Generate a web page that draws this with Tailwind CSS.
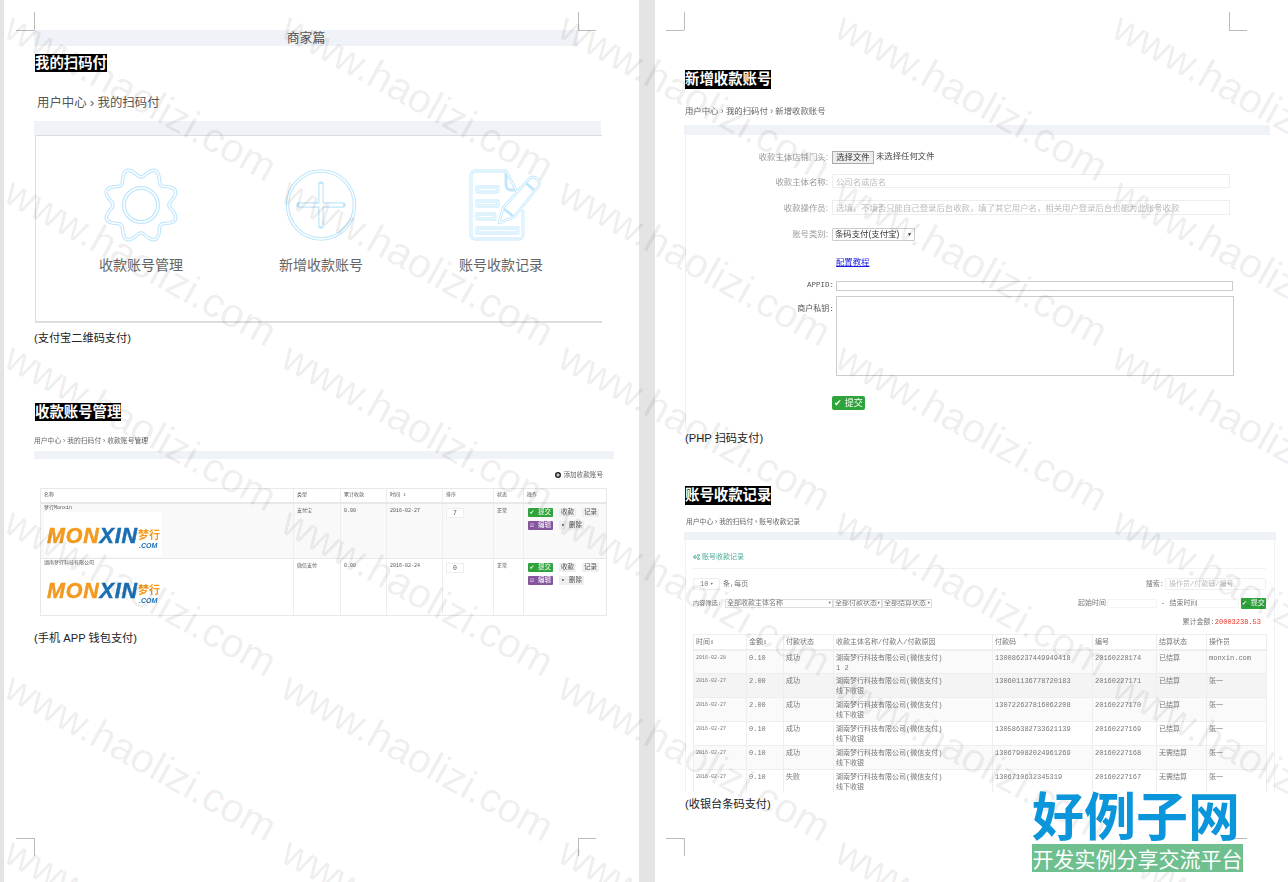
<!DOCTYPE html>
<html lang="zh-CN">
<head>
  <meta charset="UTF-8" />
  <title>商家篇</title>
  <script src="https://cdn.jsdelivr.net/npm/@tailwindcss/browser@4"></script>
</head>
<body class="relative w-[1288px] h-[882px] overflow-hidden bg-[#e4e4e4] text-[#333] font-['Liberation_Sans','Noto_Sans_CJK_SC',sans-serif]">
<div class="flex items-start">

  <!-- page 1 -->
  <section class="relative ml-[4px] w-[635px] h-[882px] bg-white pt-[30px] pl-[30px]">
    <span class="absolute left-[30px] top-[12px] w-px h-[18px] bg-[#bbb]"></span>
    <span class="absolute left-[12px] top-[30px] w-[18px] h-px bg-[#bbb]"></span>
    <span class="absolute left-[574px] top-[12px] w-px h-[18px] bg-[#bbb]"></span>
    <span class="absolute left-[574px] top-[30px] w-[18px] h-px bg-[#bbb]"></span>
    <span class="absolute left-[30px] top-[838px] w-px h-[18px] bg-[#bbb]"></span>
    <span class="absolute left-[12px] top-[838px] w-[18px] h-px bg-[#bbb]"></span>
    <span class="absolute left-[574px] top-[838px] w-px h-[18px] bg-[#bbb]"></span>
    <span class="absolute left-[574px] top-[838px] w-[18px] h-px bg-[#bbb]"></span>

    <div class="w-[544px] h-4 bg-[#eff2f6] text-center text-[12.8px] leading-4 text-[#555]">商家篇</div>
    <h2 class="mt-2 ml-px w-fit h-[18px] bg-black text-white text-[14.4px] leading-[18px] font-bold">我的扫码付</h2>
    <div class="mt-6 h-[15px] pl-[3px] text-[12.4px] leading-[15px] text-[#555]">用户中心 › 我的扫码付</div>
    <div class="mt-[10px] w-[567px] h-[14px] bg-[#eff2f6]"></div>

    <div class="w-[567px] h-[188px] ml-px border-l border-t border-b-2 border-[#ddd] grid grid-cols-[180px_180px_180px] pl-[15px] pt-[31px] text-center">
      <div class="flex flex-col items-center">
        <svg width="76" height="76" viewBox="0 0 76 76" fill="none">
          <path class="gear-path" stroke="#bfe6fb" stroke-width="3.6"/>
          <path class="gear-path" stroke="#fff" stroke-width="1.4"/>
          <circle cx="38" cy="38" r="17" stroke="#bfe6fb" stroke-width="4"/>
          <circle cx="38" cy="38" r="17" stroke="#fff" stroke-width="1.6"/>
        </svg>
        <span class="mt-[13px] text-[14px] leading-[18px] text-[#666]">收款账号管理</span>
      </div>
      <div class="flex flex-col items-center">
        <svg width="76" height="76" viewBox="0 0 76 76" fill="none">
          <ellipse cx="38" cy="38" rx="33.5" ry="34" stroke="#bfe6fb" stroke-width="3.6"/>
          <ellipse cx="38" cy="38" rx="33.5" ry="34" stroke="#fff" stroke-width="1.4"/>
          <path d="M38 17V59M16 38H60" stroke="#bfe6fb" stroke-width="5.4" stroke-linecap="round"/>
          <path d="M38 17V59M16 38H60" stroke="#fff" stroke-width="3"/>
        </svg>
        <span class="mt-[13px] text-[14px] leading-[18px] text-[#666]">新增收款账号</span>
      </div>
      <div class="flex flex-col items-center">
        <svg width="76" height="76" viewBox="-7 -3 76 76" fill="none" class="overflow-visible">
          <g stroke="#bfe6fb" stroke-width="2.8" stroke-linejoin="round">
            <path d="M47 22L36 1H5a4 4 0 0 0-4 4V65a4 4 0 0 0 4 4H49a4 4 0 0 0 4-4V40"/>
            <path d="M36 1V15a5 5 0 0 0 5 5H47"/>
            <path d="M7 17H28V22H7ZM7 31H28V36H7ZM7 44H25V49H7ZM7 58H48V63H7Z"/>
            <path d="M29 53L33 38L59 9Q63 5 67 9Q71 13 68 17L44 47Z"/>
            <path d="M33 38L44 47M56 13L65 21"/>
          </g>
          <g stroke="#fff" stroke-width="1.1" stroke-linejoin="round">
            <path d="M47 22L36 1H5a4 4 0 0 0-4 4V65a4 4 0 0 0 4 4H49a4 4 0 0 0 4-4V40"/>
            <path d="M7 17H28V22H7ZM7 31H28V36H7ZM7 44H25V49H7ZM7 58H48V63H7Z"/>
            <path d="M29 53L33 38L59 9Q63 5 67 9Q71 13 68 17L44 47Z"/>
          </g>
        </svg>
        <span class="mt-[13px] text-[14px] leading-[18px] text-[#666]">账号收款记录</span>
      </div>
    </div>

    <p class="mt-2 h-[14px] text-[11.2px] leading-[14px] text-[#222]">(支付宝二维码支付)</p>

    <h2 class="mt-[58px] ml-px w-fit h-[18px] bg-black text-white text-[14.4px] leading-[18px] font-bold">收款账号管理</h2>
    <div class="mt-[15px] h-[10px] text-[6.8px] leading-[10px] text-[#666] blur-[0.3px]">用户中心 › 我的扫码付 › 收款账号管理</div>
    <div class="mt-[5px] w-[580px] h-2 bg-[#eff2f6]"></div>
    <div class="mt-[11px] w-[569px] h-[10px] flex justify-end items-center gap-[2px] text-[6.6px] leading-[10px] text-[#666] blur-[0.3px]">
      <svg width="6" height="6" viewBox="0 0 6 6"><circle cx="3" cy="3" r="3" fill="#222"/><path d="M3 1.3V4.7M1.3 3H4.7" stroke="#fff" stroke-width="1"/></svg>
      添加收款账号
    </div>

    <table class="mt-2 ml-[6px] w-[566px] table-fixed border border-[#e8e8e8] text-[5px] leading-[7px] text-[#555] blur-[0.25px] font-['Liberation_Mono','Noto_Sans_CJK_SC',monospace]">
      <colgroup><col class="w-[253px]"/><col class="w-[47px]"/><col class="w-[46px]"/><col class="w-[56px]"/><col class="w-[51px]"/><col class="w-[30px]"/><col class="w-[83px]"/></colgroup>
      <tbody>
        <tr class="h-[14px] border-b-2 border-[#e8e8e8]">
          <td class="border-r border-[#eee] px-[3px]">名称</td><td class="border-r border-[#eee] px-[3px]">类型</td><td class="border-r border-[#eee] px-[3px]">累计收款</td><td class="border-r border-[#eee] px-[3px]">时间 ⇕</td><td class="border-r border-[#eee] px-[3px]">排序</td><td class="border-r border-[#eee] px-[3px]">状态</td><td class="px-[3px]">操作</td>
        </tr>
        <tr class="h-[56px] bg-[#f9f9f9] border-b border-[#e8e8e8] align-top">
          <td class="border-r border-[#eee] px-[3px] pt-px">
            梦行Monxin
            <div class="w-[118px] h-[45px] bg-white relative">
              <span class="absolute left-[3px] top-[13px] text-[21.5px] leading-[22px] font-bold italic tracking-[0.8px] [-webkit-text-stroke:0.5px_currentColor] font-['Liberation_Sans',sans-serif]"><span class="text-[#f39a1f]">MON</span><span class="text-[#1a6fb4]">XIN</span></span>
              <span class="absolute left-[94px] top-[16px] text-[11px] leading-[12px] font-bold text-[#f39a1f] font-['Noto_Sans_CJK_SC',sans-serif]">梦行</span>
              <span class="absolute left-[95px] top-[30px] text-[7px] leading-[8px] font-bold italic text-[#1a6fb4] font-['Liberation_Sans',sans-serif]">.COM</span>
            </div>
          </td>
          <td class="border-r border-[#eee] px-[3px] pt-[4px]">支付宝</td>
          <td class="border-r border-[#eee] px-[3px] pt-[4px]">0.00</td>
          <td class="border-r border-[#eee] px-[3px] pt-[4px]">2016-02-27</td>
          <td class="border-r border-[#eee] px-[3px] pt-[4px]"><div class="w-[18px] h-[10px] border border-[#eee] bg-white text-center text-[6.5px] leading-[9px]">7</div></td>
          <td class="border-r border-[#eee] px-[3px] pt-[4px]">正常</td>
          <td class="px-[4px] pt-[4px]">
            <div class="flex gap-[6px] text-[6.5px] leading-[9px]"><span class="flex items-center gap-[1px] w-[25px] h-[9px] rounded-[1px] bg-[#2fa33c] text-white justify-center">✔ 提交</span><span class="w-[17px] h-[9px] bg-[#f0f0f0] text-center">收款</span><span class="w-[17px] h-[9px] bg-[#f0f0f0] text-center">记录</span></div>
            <div class="flex gap-[6px] mt-[4px] text-[6.5px] leading-[9px]"><span class="w-[25px] h-[9px] rounded-[1px] bg-[#85569d] text-white text-center">☑ 编辑</span><span class="w-[25px] h-[9px] bg-[#eee] text-center">▪ 删除</span></div>
          </td>
        </tr>
        <tr class="h-[57px] align-top">
          <td class="border-r border-[#eee] px-[3px] pt-px">
            湖南梦行科技有限公司
            <div class="w-[118px] h-[45px] bg-white relative">
              <span class="absolute left-[3px] top-[13px] text-[21.5px] leading-[22px] font-bold italic tracking-[0.8px] [-webkit-text-stroke:0.5px_currentColor] font-['Liberation_Sans',sans-serif]"><span class="text-[#f39a1f]">MON</span><span class="text-[#1a6fb4]">XIN</span></span>
              <span class="absolute left-[94px] top-[16px] text-[11px] leading-[12px] font-bold text-[#f39a1f] font-['Noto_Sans_CJK_SC',sans-serif]">梦行</span>
              <span class="absolute left-[95px] top-[30px] text-[7px] leading-[8px] font-bold italic text-[#1a6fb4] font-['Liberation_Sans',sans-serif]">.COM</span>
            </div>
          </td>
          <td class="border-r border-[#eee] px-[3px] pt-[4px]">微信支付</td>
          <td class="border-r border-[#eee] px-[3px] pt-[4px]">0.00</td>
          <td class="border-r border-[#eee] px-[3px] pt-[4px]">2016-02-24</td>
          <td class="border-r border-[#eee] px-[3px] pt-[4px]"><div class="w-[18px] h-[10px] border border-[#eee] bg-white text-center text-[6.5px] leading-[9px]">0</div></td>
          <td class="border-r border-[#eee] px-[3px] pt-[4px]">正常</td>
          <td class="px-[4px] pt-[4px]">
            <div class="flex gap-[6px] text-[6.5px] leading-[9px]"><span class="flex items-center gap-[1px] w-[25px] h-[9px] rounded-[1px] bg-[#2fa33c] text-white justify-center">✔ 提交</span><span class="w-[17px] h-[9px] bg-[#f0f0f0] text-center">收款</span><span class="w-[17px] h-[9px] bg-[#f0f0f0] text-center">记录</span></div>
            <div class="flex gap-[6px] mt-[4px] text-[6.5px] leading-[9px]"><span class="w-[25px] h-[9px] rounded-[1px] bg-[#85569d] text-white text-center">☑ 编辑</span><span class="w-[25px] h-[9px] bg-[#eee] text-center">▪ 删除</span></div>
          </td>
        </tr>
      </tbody>
    </table>

    <p class="mt-[15px] h-[14px] text-[11.2px] leading-[14px] text-[#222]">(手机 APP 钱包支付)</p>
  </section>

  <!-- page 2 -->
  <section class="relative ml-4 w-[633px] h-[882px] bg-white pt-[70px] pl-[29px]">
    <span class="absolute left-[29px] top-[12px] w-px h-[18px] bg-[#bbb]"></span>
    <span class="absolute left-[11px] top-[30px] w-[18px] h-px bg-[#bbb]"></span>
    <span class="absolute left-[574px] top-[12px] w-px h-[18px] bg-[#bbb]"></span>
    <span class="absolute left-[574px] top-[30px] w-[18px] h-px bg-[#bbb]"></span>
    <span class="absolute left-[29px] top-[838px] w-px h-[18px] bg-[#bbb]"></span>
    <span class="absolute left-[11px] top-[838px] w-[18px] h-px bg-[#bbb]"></span>
    <span class="absolute left-[574px] top-[838px] w-[18px] h-px bg-[#bbb]"></span>

    <h2 class="ml-px w-fit h-[19px] bg-black text-white text-[14.4px] leading-[19px] font-bold">新增收款账号</h2>
    <div class="mt-[17px] ml-px h-[10px] text-[8.4px] leading-[10px] text-[#666] blur-[0.25px]">用户中心 › 我的扫码付 › 新增收款账号</div>
    <div class="mt-[9px] w-[586px] h-[10px] bg-[#eff2f6]"></div>

    <div class="ml-px w-[585px] h-[295px] border-l border-[#f0f0f0] pt-4 text-[8.4px] text-[#999] blur-[0.25px]">
      <div class="flex items-center h-[13px]">
        <label class="w-[142px] text-right">收款主体店铺门头:</label>
        <span class="ml-1 w-[42px] h-[13px] bg-[#eee] border border-[#aaa] text-[#333] text-center leading-[11px]">选择文件</span>
        <span class="ml-[2px] -mt-[3px] text-[#444]">未选择任何文件</span>
      </div>
      <div class="flex items-center h-[14px] mt-[10px] leading-[15px]">
        <label class="w-[142px] text-right pt-[2px]">收款主体名称:</label>
        <span class="ml-1 w-[398px] h-[14px] border border-[#eee] px-[3px] text-[#bbb] leading-[14px]">公司名或店名</span>
      </div>
      <div class="flex items-center h-[15px] mt-[12px]">
        <label class="w-[142px] text-right pt-px">收款操作员:</label>
        <span class="ml-1 w-[398px] h-[15px] border border-[#eee] px-[3px] text-[#bbb] leading-[14px]">选填，不填否只能自己登录后台收款，填了其它用户名，相关用户登录后台也能为此账号收款</span>
      </div>
      <div class="flex items-center h-[13px] mt-[13px]">
        <label class="w-[142px] text-right">账号类别:</label>
        <span class="ml-1 w-[83px] h-[13px] border border-[#ccc] rounded-[1px] px-[2px] text-[#333] leading-[11px] flex justify-between"><span>条码支付(支付宝)</span><span class="text-[5px]">▼</span></span>
      </div>
      <a class="block mt-4 ml-[150px] h-[10px] leading-[10px] text-[#1a1ae0] underline">配置教程</a>
      <div class="flex items-center h-[10px] mt-[14px] font-['Liberation_Mono','Noto_Sans_CJK_SC',monospace] text-[#555] text-[7.5px]">
        <label class="w-[148px] text-right">APPID:</label>
        <span class="ml-[2px] w-[397px] h-[10px] border border-[#ccc]"></span>
      </div>
      <div class="flex items-start h-[80px] mt-[5px] font-['Liberation_Mono','Noto_Sans_CJK_SC',monospace] text-[#555] text-[8px]">
        <label class="w-[148px] text-right mt-[7px]">商户私钥:</label>
        <span class="ml-[2px] w-[398px] h-[80px] border border-[#ccc]"></span>
      </div>
      <div class="mt-[20px] ml-[146px] w-[33px] h-[14px] rounded-[2px] bg-[#2fa33c] text-white text-[9px] leading-[14px] text-center">✔ 提交</div>
    </div>

    <p class="mt-px ml-px h-[14px] text-[11.2px] leading-[14px] text-[#222]">(PHP 扫码支付)</p>

    <h2 class="mt-[41px] ml-px w-fit h-[19px] bg-black text-white text-[14.4px] leading-[19px] font-bold">账号收款记录</h2>
    <div class="mt-[12px] ml-[2px] h-[10px] text-[6.8px] leading-[10px] text-[#666] blur-[0.3px]">用户中心 › 我的扫码付 › 账号收款记录</div>
    <div class="mt-[5px] w-[592px] h-2 bg-[#eff2f6]"></div>

    <div class="ml-px w-[590px] h-[252px] overflow-hidden border-x border-[#eff2f6] pl-[7px] pr-2 pt-3 text-[7px] text-[#777] blur-[0.3px] font-['Liberation_Mono','Noto_Sans_CJK_SC',monospace]">
      <div class="h-[10px] leading-[10px] text-[#4bab99] flex items-center gap-[2px]">
        <svg width="7" height="6" viewBox="0 0 7 6" fill="none" stroke="#4bab99"><circle cx="2" cy="3" r="1.3"/><circle cx="5.5" cy="1.3" r="1"/><circle cx="5.5" cy="4.7" r="1"/></svg>
        账号收款记录
      </div>
      <div class="mt-[6px] h-px w-[573px] bg-[#f2f2f2]"></div>
      <div class="mt-[9px] w-[573px] h-3 flex items-center justify-between">
        <div class="flex items-center gap-[3px]"><span class="w-[27px] h-3 border border-[#eee] rounded-[2px] px-[6px] leading-[10px] flex justify-between"><span>10</span><span class="text-[4px]">▼</span></span>条,每页</div>
        <div class="flex items-center gap-[1px]">搜索:<span class="w-[101px] h-3 border border-[#eee] rounded-[2px] px-[3px] leading-[10px] text-[#bbb]">操作员/付款码/编号</span></div>
      </div>
      <div class="mt-2 w-[573px] h-[11px] flex items-center">
        <span class="w-[32px] text-[6.2px] whitespace-nowrap">内容筛选:</span>
        <span class="w-[108px] h-[9px] border border-[#ddd] px-px leading-[7px] flex justify-between"><span>全部收款主体名称</span><span class="text-[4px]">▼</span></span>
        <span class="w-[49px] h-[9px] border border-[#ddd] px-px leading-[7px] flex justify-between whitespace-nowrap overflow-hidden"><span>全部付款状态</span><span class="text-[4px]">▼</span></span>
        <span class="w-[50px] h-[9px] border border-[#ddd] px-px leading-[7px] flex justify-between whitespace-nowrap overflow-hidden"><span>全部结算状态</span><span class="text-[4px]">▼</span></span>
        <span class="ml-[146px] w-[29px]">起始时间</span>
        <span class="w-[50px] h-[9px] border border-[#f4f4f4]"></span>
        <span class="ml-[4px] w-[33px] whitespace-nowrap">- 结束时间</span>
        <span class="w-[45px] h-[9px] border border-[#f4f4f4]"></span>
        <span class="ml-[2px] w-[25px] h-[11px] rounded-[1px] bg-[#2fa33c] text-white leading-[11px] text-center whitespace-nowrap">✔ 提交</span>
      </div>
      <div class="mt-2 w-[568px] h-[10px] leading-[10px] text-right">累计金额:<span class="text-[#ee3322]">20003238.53</span></div>
      <table class="mt-[7px] w-[573px] table-fixed border border-[#eee]">
        <colgroup><col class="w-[53px]"/><col class="w-[37px]"/><col class="w-[50px]"/><col class="w-[159px]"/><col class="w-[100px]"/><col class="w-[64px]"/><col class="w-[50px]"/><col class="w-[60px]"/></colgroup>
        <thead>
          <tr class="h-[15px] border-b-2 border-[#eee] text-left">
            <th class="font-normal border-r border-[#eee] px-[2px]">时间⇕</th><th class="font-normal border-r border-[#eee] px-[2px]">金额⇕</th><th class="font-normal border-r border-[#eee] px-[2px]">付款状态</th><th class="font-normal border-r border-[#eee] px-[2px]">收款主体名称/付款人/付款原因</th><th class="font-normal border-r border-[#eee] px-[2px]">付款码</th><th class="font-normal border-r border-[#eee] px-[2px]">编号</th><th class="font-normal border-r border-[#eee] px-[2px]">结算状态</th><th class="font-normal px-[2px]">操作员</th>
          </tr>
        </thead>
        <tbody id="records"></tbody>
      </table>
    </div>

    <p class="mt-[5px] ml-px h-[14px] text-[11.2px] leading-[14px] text-[#222]">(收银台条码支付)</p>
  </section>
</div>

<!-- watermark -->
<div id="marks" class="absolute inset-0 overflow-hidden pointer-events-none"></div>

<!-- site logo -->
<div class="absolute left-[1032px] top-[790px] w-[211px]">
  <div class="h-[54px] text-[52px] leading-[48px] font-bold text-[#0b96dc] whitespace-nowrap font-['Noto_Sans_CJK_SC',sans-serif]">好例子网</div>
  <div class="h-[28px] bg-[#6fbf8f] text-center text-[21px] leading-[28px] text-white whitespace-nowrap font-['Noto_Sans_CJK_SC',sans-serif]">开发实例分享交流平台</div>
</div>

<script>
  // gear outline
  let gear = "";
  for (let i = 0; i <= 240; i++) {
    const a = (i / 240) * Math.PI * 2;
    const r = 32.6 - 4.6 * Math.cos(8 * a);
    gear += (i ? "L" : "M") + (38 + r * Math.sin(a)).toFixed(2) + " " + (38 - r * Math.cos(a)).toFixed(2);
  }
  document.querySelectorAll(".gear-path").forEach(p => p.setAttribute("d", gear + "Z"));

  // receipt rows
  const company = "湖南梦行科技有限公司(微信支付)";
  const rows = [
    ["2016-02-28", "0.10", "成功", "1 2", "130086237449949418", "20160228174", "已结算", "monxin.com", "bg-[#fafafa]"],
    ["2016-02-27", "2.00", "成功", "线下收银", "130601136778720183", "20160227171", "已结算", "张一", "bg-[#f4f4f4]"],
    ["2016-02-27", "2.00", "成功", "线下收银", "130722627816062208", "20160227170", "已结算", "张一", "bg-[#fafafa]"],
    ["2016-02-27", "0.10", "成功", "线下收银", "130586382733621139", "20160227169", "已结算", "张一", "bg-white"],
    ["2016-02-27", "0.10", "成功", "线下收银", "130679082024961269", "20160227168", "无需结算", "张一", "bg-[#fafafa]"],
    ["2016-02-27", "0.10", "失败", "线下收银", "1306710632345319", "20160227167", "无需结算", "张一", "bg-white"],
  ];
  document.getElementById("records").innerHTML = rows.map(r => `
    <tr class="h-[24px] border-b border-[#eee] align-top leading-[10px] ${r[8]}">
      <td class="border-r border-[#eee] px-[2px] pt-[2px] text-[5px]">${r[0]}</td>
      <td class="border-r border-[#eee] px-[2px] pt-[2px]">${r[1]}</td>
      <td class="border-r border-[#eee] px-[2px] pt-[2px]">${r[2]}</td>
      <td class="border-r border-[#eee] px-[2px] pt-[2px]">${company}<br>${r[3]}</td>
      <td class="border-r border-[#eee] px-[2px] pt-[2px]">${r[4]}</td>
      <td class="border-r border-[#eee] px-[2px] pt-[2px]">${r[5]}</td>
      <td class="border-r border-[#eee] px-[2px] pt-[2px]">${r[6]}</td>
      <td class="px-[2px] pt-[2px]">${r[7]}</td>
    </tr>`).join("");

  // repeating www.haolizi.com watermark
  const marks = document.getElementById("marks");
  for (let y = 20; y < 882; y += 165) {
    for (let x = 18; x < 1288; x += 277) {
      const s = document.createElement("span");
      s.className = "absolute origin-top-left whitespace-nowrap text-[41px] leading-none text-black/[0.08] rotate-[29deg]";
      s.style.left = x + "px";
      s.style.top = (y - 14) + "px";
      s.textContent = "www.haolizi.com";
      marks.appendChild(s);
    }
  }
</script>
</body>
</html>
